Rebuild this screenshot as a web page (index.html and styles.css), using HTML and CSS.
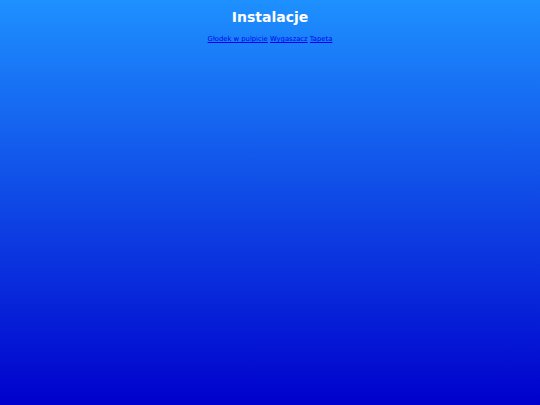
FILE: index.html
```html
<!DOCTYPE html>
<html>
<head>
<meta charset="utf-8">
<link rel="stylesheet" href="styles.css">
</head>
<body>
<h1 class="title">Instalacje</h1>
<nav class="links"><a href="#">Głodek w pulpicie</a> <a href="#">Wygaszacz</a> <a href="#">Tapeta</a></nav>
</body>
</html>
```
FILE: styles.css
```css
html, body { margin: 0; padding: 0; height: 100%; }
body {
  background: linear-gradient(to bottom, #1e90ff, #0000cc);
  font-family: "DejaVu Sans", Verdana, sans-serif;
  text-align: center;
}
.title {
  margin: 0;
  padding-top: 9px;
  font-size: 14px;
  font-weight: bold;
  color: #ffffff;
  line-height: 17px;
}
.links {
  margin-top: 9px;
  font-size: 6.8px;
  line-height: 9px;
}
.links a { color: #0000ee; }
```
